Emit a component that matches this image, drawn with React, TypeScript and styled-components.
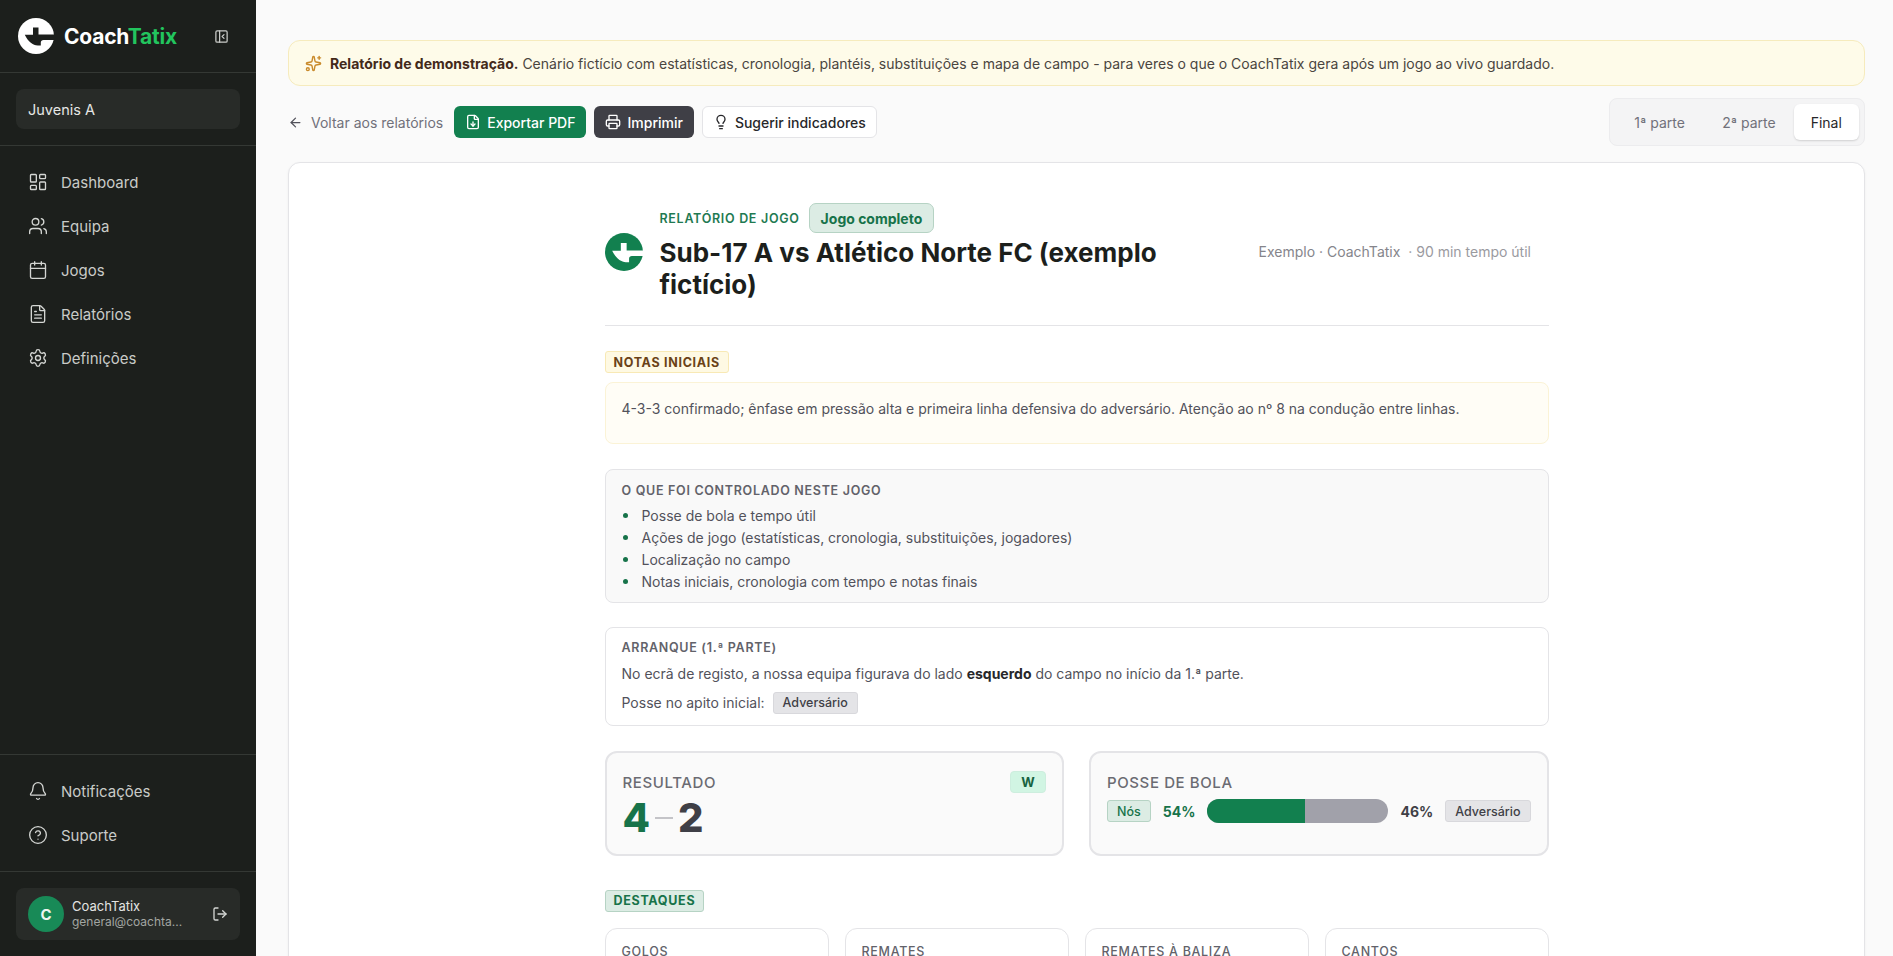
import styled, { createGlobalStyle } from "styled-components";
import {
  ArrowLeft,
  Bell,
  Calendar,
  CircleHelp,
  FileDown,
  FileText,
  LayoutDashboard,
  Lightbulb,
  LogOut,
  PanelLeftClose,
  Printer,
  Settings,
  Sparkles,
  Users,
} from "lucide-react";

const GlobalStyle = createGlobalStyle`
  * { box-sizing: border-box; }
  html, body { margin: 0; height: 100%; overflow: hidden; }
  body {
    font-family: Inter, "Noto Sans", "Liberation Sans", sans-serif;
    background: #fafafa;
    color: #1c1f1c;
  }
`;

const Shell = styled.div`
  display: flex;
  height: 956px;
  overflow: hidden;
`;

const Sidebar = styled.aside`
  width: 256px;
  flex-shrink: 0;
  display: flex;
  flex-direction: column;
  background: #1c1f1c;
  color: #d4d6d3;
`;

const BrandRow = styled.div`
  height: 73px;
  display: flex;
  align-items: center;
  padding: 0 27px 0 18px;
  border-bottom: 1px solid #343834;
`;

const BrandName = styled.span`
  margin-left: 10px;
  flex: 1;
  font-size: 21px;
  font-weight: 700;
  letter-spacing: -0.2px;
  color: #fff;
  span { color: #22c55e; }
`;

const TeamBlock = styled.div`
  padding: 16px;
  border-bottom: 1px solid #343834;
`;

const TeamSelect = styled.div`
  height: 40px;
  display: flex;
  align-items: center;
  padding: 0 12px;
  border-radius: 8px;
  background: #282b28;
  font-size: 14.5px;
  color: #e6e7e5;
`;

const Nav = styled.nav`
  padding: 14px 16px;
  display: flex;
  flex-direction: column;
  flex: 1;
`;

const NavItem = styled.div`
  height: 44px;
  display: flex;
  align-items: center;
  gap: 13px;
  padding-left: 12px;
  font-size: 15px;
  color: #c9cbc8;
  svg { flex-shrink: 0; color: #d4d6d3; }
`;

const BottomNav = styled(Nav)`
  flex: none;
  border-top: 1px solid #343834;
  padding: 14px 16px;
`;

const UserBlock = styled.div`
  border-top: 1px solid #343834;
  padding: 16px 16px;
  height: 85px;
`;

const UserCard = styled.div`
  height: 52px;
  display: flex;
  align-items: center;
  padding: 0 12px;
  border-radius: 8px;
  background: #282b28;
`;

const Avatar = styled.div`
  width: 36px;
  height: 36px;
  border-radius: 50%;
  background: #15803d;
  background: #188a57;
  color: #eef5f0;
  display: flex;
  align-items: center;
  justify-content: center;
  font-size: 15px;
  font-weight: 700;
`;

const UserText = styled.div`
  margin-left: 8px;
  flex: 1;
  min-width: 0;
`;

const UserName = styled.div`
  font-size: 13px;
  line-height: 16px;
  color: #e3e4e2;
`;

const UserMail = styled.div`
  font-size: 12px;
  line-height: 16px;
  color: #a3a6a2;
`;

const Main = styled.main`
  flex: 1;
  min-width: 0;
  padding: 40px 28px 0 32px;
  background: #fafafa;
  overflow: hidden;
`;

const DemoBanner = styled.div`
  height: 46px;
  display: flex;
  align-items: center;
  gap: 8px;
  padding: 0 16px;
  border: 1px solid #f6ebbd;
  border-radius: 12px;
  background: #fefbe9;
  font-size: 14px;
  color: #4a4540;
  svg { color: #c98a2b; flex-shrink: 0; }
  strong { color: #43291a; font-weight: 700; }
`;

const Toolbar = styled.div`
  height: 48px;
  margin-top: 12px;
  display: flex;
  align-items: center;
  justify-content: space-between;
`;

const ToolActions = styled.div`
  display: flex;
  align-items: center;
  gap: 8px;
`;

const BackLink = styled.div`
  display: flex;
  align-items: center;
  gap: 8px;
  margin-right: 3px;
  font-size: 14px;
  color: #71717a;
  svg { color: #52525b; }
`;

const ActionButton = styled.div<{ $tone: "green" | "dark" | "light" }>`
  height: 32px;
  display: flex;
  align-items: center;
  gap: 6px;
  padding: 0 10px;
  border-radius: 6px;
  font-size: 14px;
  font-weight: 500;
  color: ${(p) => (p.$tone === "light" ? "#27272a" : "#fff")};
  background: ${(p) =>
    p.$tone === "green" ? "#12804f" : p.$tone === "dark" ? "#3f3f46" : "#fff"};
  border: 1px solid ${(p) => (p.$tone === "light" ? "#e4e4e7" : "transparent")};
`;

const Segments = styled.div`
  width: 256px;
  height: 48px;
  display: flex;
  align-items: center;
  padding: 5px;
  border: 1px solid #ececee;
  border-radius: 8px;
  background: #f4f4f5;
`;

const Segment = styled.div<{ $active?: boolean; $w: number }>`
  width: ${(p) => p.$w}px;
  height: 36px;
  display: flex;
  align-items: center;
  justify-content: center;
  border-radius: 6px;
  font-size: 14px;
  color: ${(p) => (p.$active ? "#27272a" : "#71717a")};
  background: ${(p) => (p.$active ? "#fff" : "transparent")};
  box-shadow: ${(p) => (p.$active ? "0 1px 2px rgba(0,0,0,.15)" : "none")};
`;

const ReportCard = styled.section`
  margin-top: 16px;
  height: 900px;
  padding: 40px 0 0;
  border: 1px solid #e4e4e7;
  border-radius: 12px;
  background: #fff;
  box-shadow: 0 1px 3px rgba(0, 0, 0, 0.05);
`;

const Column = styled.div`
  width: 944px;
  margin: 0 auto;
  transform: translateX(0);
`;

const ReportHeader = styled.header`
  display: flex;
  align-items: center;
  justify-content: space-between;
  padding-bottom: 24px;
  border-bottom: 1px solid #e4e4e7;
`;

const HeaderMain = styled.div`
  display: flex;
  align-items: center;
  gap: 17px;
`;

const TitleBlock = styled.div`
  width: 560px;
`;

const EyebrowRow = styled.div`
  display: flex;
  align-items: center;
  gap: 9px;
`;

const Eyebrow = styled.span`
  font-size: 12.5px;
  font-weight: 600;
  letter-spacing: 0.7px;
  color: #1f7a52;
`;

const CompleteBadge = styled.span`
  height: 30px;
  display: flex;
  align-items: center;
  padding: 0 11px;
  border: 1px solid #b6d3c4;
  border-radius: 7px;
  background: #dcece4;
  font-size: 14px;
  font-weight: 700;
  color: #17734a;
`;

const Title = styled.h1`
  margin: 4px 0 0;
  font-size: 26px;
  line-height: 32px;
  font-weight: 700;
  color: #1c1f1c;
`;

const Meta = styled.div`
  width: 290px;
  font-size: 14px;
  line-height: 20px;
  color: #9a9a9f;
  span { color: #85858b; }
`;

const SectionTag = styled.span<{ $tone: "amber" | "green" }>`
  display: inline-flex;
  align-items: center;
  height: 22px;
  padding: 0 8px;
  border-radius: 3px;
  font-size: 12.5px;
  font-weight: 700;
  letter-spacing: 0.7px;
  color: ${(p) => (p.$tone === "amber" ? "#6a4216" : "#17734a")};
  background: ${(p) => (p.$tone === "amber" ? "#fef9e3" : "#dcece4")};
  border: 1px solid ${(p) => (p.$tone === "amber" ? "#f8e9b5" : "#b6d3c4")};
`;

const NotesBlock = styled.div`
  margin-top: 25px;
  display: flex;
  flex-direction: column;
  align-items: flex-start;
`;

const NoteBox = styled.div`
  width: 100%;
  height: 62px;
  margin-top: 9px;
  padding: 16px;
  border: 1px solid #fbf3d6;
  border-radius: 8px;
  background: #fffdf6;
  font-size: 14px;
  line-height: 20px;
  color: #52525b;
`;

const InfoBox = styled.div<{ $muted?: boolean }>`
  margin-top: ${(p) => (p.$muted ? "25px" : "24px")};
  padding: ${(p) => (p.$muted ? "12px 16px 10px" : "11px 16px 11px")};
  border: 1px solid #e4e4e7;
  border-radius: 8px;
  background: ${(p) => (p.$muted ? "#f9f9f9" : "#fff")};
`;

const InfoTitle = styled.div`
  font-size: 12.5px;
  line-height: 18px;
  font-weight: 600;
  letter-spacing: 0.7px;
  color: #62626a;
`;

const BulletList = styled.ul`
  margin: 4px 0 0;
  padding: 0;
  list-style: none;
`;

const Bullet = styled.li`
  display: flex;
  align-items: center;
  gap: 14px;
  height: 22px;
  font-size: 14px;
  color: #52525b;
  &::before {
    content: "";
    width: 5px;
    height: 5px;
    margin-left: 1px;
    border-radius: 50%;
    background: #17734a;
  }
`;

const InfoLine = styled.p`
  margin: 7px 0 0;
  font-size: 14px;
  line-height: 20px;
  color: #52525b;
  strong { color: #27272a; font-weight: 700; }
`;

const PossessionLine = styled(InfoLine)`
  display: flex;
  align-items: center;
  gap: 8px;
  margin-top: 8px;
`;

const GreyChip = styled.span`
  height: 22px;
  display: inline-flex;
  align-items: center;
  padding: 0 9px;
  border: 1px solid #d8d8dc;
  border-radius: 3px;
  background: #e4e4e7;
  font-size: 12.5px;
  font-weight: 500;
  color: #3f3f46;
`;

const GreenChip = styled(GreyChip)`
  background: #dcece4;
  border-color: #b6d3c4;
  color: #17734a;
`;

const ScoreGrid = styled.div`
  margin-top: 25px;
  display: grid;
  grid-template-columns: 1fr 1fr;
  gap: 25px;
`;

const ScoreCard = styled.div`
  height: 105px;
  padding: 18px 16px;
  border: 2px solid #e4e4e7;
  border-radius: 12px;
  background: #fafafa;
`;

const ScoreTop = styled.div`
  display: flex;
  align-items: center;
  justify-content: space-between;
  height: 22px;
`;

const ScoreLabel = styled.span`
  font-size: 15px;
  font-weight: 500;
  letter-spacing: 0.6px;
  color: #6b6b72;
`;

const ResultBadge = styled.span`
  width: 36px;
  height: 22px;
  display: flex;
  align-items: center;
  justify-content: center;
  border: 1px solid #cdeede;
  border-radius: 4px;
  background: #d1f5e3;
  font-size: 13px;
  font-weight: 700;
  color: #17633f;
`;

const ScoreLine = styled.div`
  margin-top: 2px;
  display: flex;
  align-items: center;
  gap: 5px;
  font-size: 40px;
  line-height: 46px;
  font-weight: 800;
  color: #3f3f46;
  em { font-style: normal; color: #17734a; }
  i { width: 18px; height: 1.5px; background: #c4c4c8; }
`;

const PossessionRow = styled.div`
  margin-top: 6px;
  display: flex;
  align-items: center;
  gap: 12px;
`;

const Percent = styled.span<{ $us?: boolean }>`
  font-size: 14px;
  font-weight: 700;
  color: ${(p) => (p.$us ? "#17734a" : "#3f3f46")};
`;

const PossessionBar = styled.div`
  flex: 1;
  height: 24px;
  display: flex;
  overflow: hidden;
  border-radius: 12px;
  background: #a1a1aa;
`;

const PossessionFill = styled.div`
  height: 100%;
  background: #12804f;
`;

const StatGrid = styled.div`
  margin-top: 16px;
  display: grid;
  grid-template-columns: repeat(4, 1fr);
  gap: 16px;
`;

const StatCard = styled.div`
  height: 90px;
  padding: 15px 16px;
  border: 1px solid #e4e4e7;
  border-radius: 12px;
  background: #fff;
  font-size: 12.5px;
  font-weight: 500;
  letter-spacing: 0.7px;
  color: #62626a;
`;

const TagBlock = styled.div`
  margin-top: 33px;
`;

function LogoMark({ size, ground, cut }: { size: number; ground: string; cut: string }) {
  return (
    <svg width={size} height={size} viewBox="0 0 36 36" aria-hidden="true">
      <circle cx="18" cy="18" r="18" fill={ground} />
      <path
        d="M15 9.5h5.5v7H36v5.4H25.5c-1.6 0-2.7 1-2.7 2.5v3.2h-3c-5 0-10-4.4-13-10.8h8.2V9.500z"
        fill={cut}
      />
    </svg>
  );
}

const navItems = [
  { icon: LayoutDashboard, label: "Dashboard" },
  { icon: Users, label: "Equipa" },
  { icon: Calendar, label: "Jogos" },
  { icon: FileText, label: "Relatórios" },
  { icon: Settings, label: "Definições" },
];

const controlled = [
  "Posse de bola e tempo útil",
  "Ações de jogo (estatísticas, cronologia, substituições, jogadores)",
  "Localização no campo",
  "Notas iniciais, cronologia com tempo e notas finais",
];

const stats = ["GOLOS", "REMATES", "REMATES À BALIZA", "CANTOS"];

export default function App() {
  return (
    <Shell>
      <GlobalStyle />
      <Sidebar>
        <BrandRow>
          <LogoMark size={36} ground="#ffffff" cut="#1c1f1c" />
          <BrandName>
            Coach<span>Tatix</span>
          </BrandName>
          <PanelLeftClose size={15} color="#c9cbc8" />
        </BrandRow>
        <TeamBlock>
          <TeamSelect>Juvenis A</TeamSelect>
        </TeamBlock>
        <Nav>
          {navItems.map(({ icon: Icon, label }) => (
            <NavItem key={label}>
              <Icon size={20} strokeWidth={1.6} />
              {label}
            </NavItem>
          ))}
        </Nav>
        <BottomNav>
          <NavItem>
            <Bell size={20} strokeWidth={1.6} />
            Notificações
          </NavItem>
          <NavItem>
            <CircleHelp size={20} strokeWidth={1.6} />
            Suporte
          </NavItem>
        </BottomNav>
        <UserBlock>
          <UserCard>
            <Avatar>C</Avatar>
            <UserText>
              <UserName>CoachTatix</UserName>
              <UserMail>general@coachta...</UserMail>
            </UserText>
            <LogOut size={16} color="#d4d6d3" />
          </UserCard>
        </UserBlock>
      </Sidebar>
      <Main>
        <DemoBanner>
          <Sparkles size={17} />
          <span>
            <strong>Relatório de demonstração.</strong> Cenário fictício com estatísticas, cronologia,
            plantéis, substituições e mapa de campo - para veres o que o CoachTatix gera após um jogo
            ao vivo guardado.
          </span>
        </DemoBanner>
        <Toolbar>
          <ToolActions>
            <BackLink>
              <ArrowLeft size={15} />
              Voltar aos relatórios
            </BackLink>
            <ActionButton $tone="green">
              <FileDown size={16} />
              Exportar PDF
            </ActionButton>
            <ActionButton $tone="dark">
              <Printer size={16} />
              Imprimir
            </ActionButton>
            <ActionButton $tone="light">
              <Lightbulb size={16} />
              Sugerir indicadores
            </ActionButton>
          </ToolActions>
          <Segments>
            <Segment $w={90}>1ª parte</Segment>
            <Segment $w={90}>2ª parte</Segment>
            <Segment $w={66} $active>
              Final
            </Segment>
          </Segments>
        </Toolbar>
        <ReportCard>
          <Column>
            <ReportHeader>
              <HeaderMain>
                <LogoMark size={38} ground="#12804f" cut="#ffffff" />
                <TitleBlock>
                  <EyebrowRow>
                    <Eyebrow>RELATÓRIO DE JOGO</Eyebrow>
                    <CompleteBadge>Jogo completo</CompleteBadge>
                  </EyebrowRow>
                  <Title>Sub-17 A vs Atlético Norte FC (exemplo fictício)</Title>
                </TitleBlock>
              </HeaderMain>
              <Meta>
                <span>Exemplo · CoachTatix</span> &nbsp;· 90 min tempo útil
              </Meta>
            </ReportHeader>
            <NotesBlock>
              <SectionTag $tone="amber">NOTAS INICIAIS</SectionTag>
              <NoteBox>
                4-3-3 confirmado; ênfase em pressão alta e primeira linha defensiva do adversário. Atenção
                ao nº 8 na condução entre linhas.
              </NoteBox>
            </NotesBlock>
            <InfoBox $muted>
              <InfoTitle>O QUE FOI CONTROLADO NESTE JOGO</InfoTitle>
              <BulletList>
                {controlled.map((item) => (
                  <Bullet key={item}>{item}</Bullet>
                ))}
              </BulletList>
            </InfoBox>
            <InfoBox>
              <InfoTitle>ARRANQUE (1.ª PARTE)</InfoTitle>
              <InfoLine>
                No ecrã de registo, a nossa equipa figurava do lado <strong>esquerdo</strong> do campo no
                início da 1.ª parte.
              </InfoLine>
              <PossessionLine>
                Posse no apito inicial: <GreyChip>Adversário</GreyChip>
              </PossessionLine>
            </InfoBox>
            <ScoreGrid>
              <ScoreCard>
                <ScoreTop>
                  <ScoreLabel>RESULTADO</ScoreLabel>
                  <ResultBadge>W</ResultBadge>
                </ScoreTop>
                <ScoreLine>
                  <em>4</em>
                  <i />2
                </ScoreLine>
              </ScoreCard>
              <ScoreCard>
                <ScoreTop>
                  <ScoreLabel>POSSE DE BOLA</ScoreLabel>
                </ScoreTop>
                <PossessionRow>
                  <GreenChip>Nós</GreenChip>
                  <Percent $us>54%</Percent>
                  <PossessionBar>
                    <PossessionFill style={{ width: "54%" }} />
                  </PossessionBar>
                  <Percent>46%</Percent>
                  <GreyChip>Adversário</GreyChip>
                </PossessionRow>
              </ScoreCard>
            </ScoreGrid>
            <TagBlock>
              <SectionTag $tone="green">DESTAQUES</SectionTag>
            </TagBlock>
            <StatGrid>
              {stats.map((s) => (
                <StatCard key={s}>{s}</StatCard>
              ))}
            </StatGrid>
          </Column>
        </ReportCard>
      </Main>
    </Shell>
  );
}
